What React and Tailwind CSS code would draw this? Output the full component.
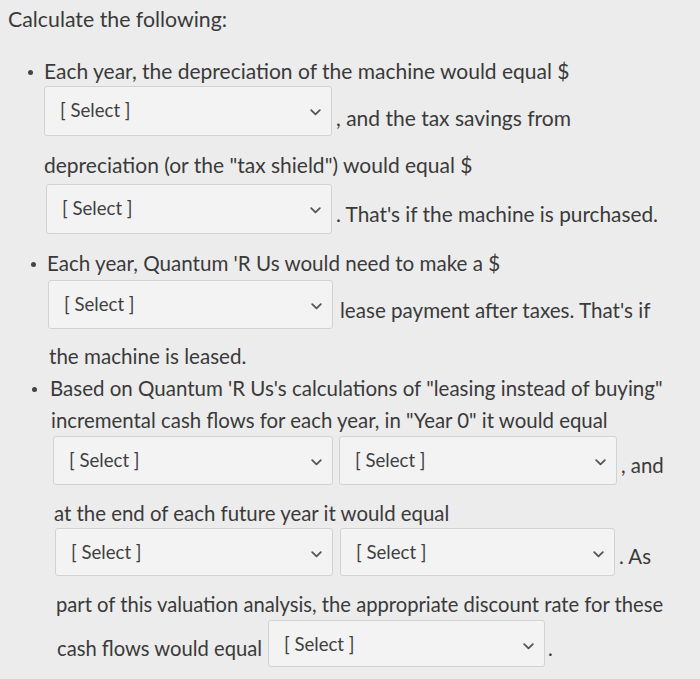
import React from "react";

function Chevron() {
  return (
    <svg width="11" height="7" viewBox="0 0 11 7" fill="none">
      <path d="M1.2 1.2 L5.5 5.4 L9.8 1.2" stroke="#555" strokeWidth="1.8" strokeLinecap="round" strokeLinejoin="round" />
    </svg>
  );
}

function Select({ w, h = "h-[50px]" }) {
  return (
    <div className={`${w} ${h} shrink-0 rounded-[3px] border border-[#d2d2d2] bg-[#f3f3f3] flex items-start justify-between pl-[15px] pr-[10px] pt-[10px]`}>
      <span className="text-[18.6px] leading-[26px] text-[#3f3f3f]">[ Select ]</span>
      <span className="mt-[12px]"><Chevron /></span>
    </div>
  );
}

function Dot() {
  return <span className="w-[5px] h-[5px] rounded-full bg-[#444] shrink-0 mt-[3px]" />;
}

export default function App() {
  return (
    <div className="w-[700px] h-[679px] overflow-hidden bg-[#ececec] text-[#3a3a3a] font-['Lato','Liberation_Sans',sans-serif] text-[20.4px]">
      <div className="h-[40px] flex items-center pl-[8px] text-[21.3px]">Calculate the following:</div>

      {/* bullet 1 */}
      <div className="text-[21px]">
        <div className="mt-[16px] h-[30px] flex items-center pl-[28px] gap-[11px]">
          <Dot />
          <span>Each year, the depreciation of the machine would equal $</span>
        </div>
        <div className="flex items-start pl-[44px]">
          <Select w="w-[288px]" />
          <span className="mt-[17px] h-[30px] leading-[30px] ml-[4px]">, and the tax savings from</span>
        </div>
        <div className="mt-[14px] h-[30px] flex items-center pl-[44px]">depreciation (or the "tax shield") would equal $</div>
        <div className="mt-[4px] flex items-start pl-[46px]">
          <Select w="w-[286px]" />
          <span className="mt-[15px] h-[30px] leading-[30px] ml-[4px] text-[20.8px]">. That's if the machine is purchased.</span>
        </div>
      </div>

      {/* bullet 2 */}
      <div className="text-[20.6px]">
        <div className="mt-[14px] h-[30px] flex items-center pl-[31px] gap-[11px]">
          <Dot />
          <span>Each year, Quantum 'R Us would need to make a $</span>
        </div>
        <div className="mt-[2px] flex items-start pl-[48px]">
          <Select w="w-[285px]" h="h-[49px]" />
          <span className="mt-[15px] h-[30px] leading-[30px] ml-[7px]">lease payment after taxes. That's if</span>
        </div>
        <div className="mt-[12px] h-[30px] flex items-center pl-[49px]">the machine is leased.</div>
      </div>

      {/* bullet 3 */}
      <div className="mt-[2px] h-[30px] flex items-center pl-[32px] gap-[13px] text-[20.5px]">
        <Dot />
        <span>Based on Quantum 'R Us's calculations of "leasing instead of buying"</span>
      </div>
      <div className="mt-[2px] h-[30px] flex items-center pl-[51px]">incremental cash flows for each year, in "Year 0" it would equal</div>
      <div className="mt-[1px] flex items-start pl-[53px]">
        <Select w="w-[280px]" h="h-[49px]" />
        <span className="ml-[6px]"><Select w="w-[278px]" h="h-[49px]" /></span>
        <span className="mt-[14px] h-[30px] leading-[30px] ml-[4px]">, and</span>
      </div>
      <div className="mt-[13px] h-[30px] flex items-center pl-[54px]">at the end of each future year it would equal</div>
      <div className="flex items-start pl-[55px]">
        <Select w="w-[278px]" h="h-[48px]" />
        <span className="ml-[7px]"><Select w="w-[275px]" h="h-[48px]" /></span>
        <span className="mt-[13px] h-[30px] leading-[30px] ml-[4px]">. As</span>
      </div>
      <div className="mt-[13px] h-[30px] flex items-center pl-[56px] text-[20.2px]">part of this valuation analysis, the appropriate discount rate for these</div>
      <div className="mt-[1px] flex items-start pl-[57px] text-[20.2px]">
        <span className="mt-[13px] h-[30px] leading-[30px] mr-[6px]">cash flows would equal</span>
        <Select w="w-[277px]" h="h-[47px]" />
        <span className="mt-[13px] h-[30px] leading-[30px] ml-[3px]">.</span>
      </div>
    </div>
  );
}
